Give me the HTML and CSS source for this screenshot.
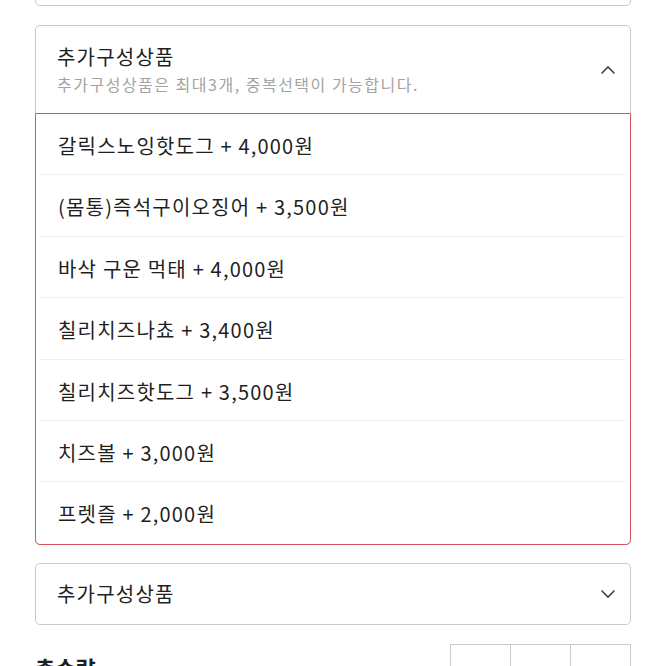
FILE: index.html
```html
<!DOCTYPE html>
<html>
<head>
    <title>추가구성상품</title>
    <link rel="stylesheet" href="styles.css">
</head>
<body>
    <div class="page">
        <div class="prev-box"></div>

        <div class="option open">
            <div class="option-head">
                <div class="head-text">
                    <p class="head-title">추가구성상품</p>
                    <p class="head-sub">추가구성상품은 최대3개, 중복선택이 가능합니다.</p>
                </div>
                <svg class="chevron" width="16" height="10" viewBox="0 0 16 10">
                    <path d="M1.5 8.5 L8 2 L14.5 8.5" fill="none" stroke="#444" stroke-width="1.6"/>
                </svg>
            </div>
            <ul class="option-list">
                <li class="option-item">갈릭스노잉핫도그 + 4,000원</li>
                <li class="option-item">(몸통)즉석구이오징어 + 3,500원</li>
                <li class="option-item">바삭 구운 먹태 + 4,000원</li>
                <li class="option-item">칠리치즈나쵸 + 3,400원</li>
                <li class="option-item">칠리치즈핫도그 + 3,500원</li>
                <li class="option-item">치즈볼 + 3,000원</li>
                <li class="option-item">프렛즐 + 2,000원</li>
            </ul>
        </div>

        <div class="option closed">
            <span class="closed-title">추가구성상품</span>
            <svg class="chevron" width="16" height="10" viewBox="0 0 16 10">
                <path d="M1.5 1.5 L8 8 L14.5 1.5" fill="none" stroke="#444" stroke-width="1.6"/>
            </svg>
        </div>

        <div class="total">
            <span class="total-label">총수량</span>
            <div class="qty">
                <div class="qty-cell"></div>
                <div class="qty-cell"></div>
                <div class="qty-cell"></div>
            </div>
        </div>
    </div>
</body>
</html>
```

FILE: styles.css
```css
body{
    margin: 0;
    background-color: white;
    color: #1f1f1f;
    font-family: "Noto Sans CJK KR", "Noto Sans", sans-serif;
}

.page{
    padding: 0 35px;
}

.prev-box{
    height: 50px;
    margin-top: -46px;
    border: 1px solid #c9c9c9;
    border-radius: 5px;
}

.option{
    border: 1px solid #c9c9c9;
    border-radius: 5px;
    background-color: white;
}

.open{
    margin-top: 19px;
}

.option-head{
    display: flex;
    align-items: center;
    justify-content: space-between;
    box-sizing: border-box;
    height: 87px;
    padding: 0 14px 0 21px;
}

.head-text p{
    margin: 0;
}

.head-title{
    font-size: 20px;
    line-height: 26px;
    letter-spacing: 1.2px;
}

.head-sub{
    font-size: 16px;
    line-height: 22px;
    color: #a3a3a3;
    letter-spacing: 1.5px;
    margin-top: 3px !important;
}

.option-list{
    list-style: none;
    margin: 0 -1px -1px -1px;
    padding: 0;
    border: 1px solid #d9545f;
    border-radius: 0 0 5px 5px;
}

.option-item{
    box-sizing: border-box;
    height: 61.4px;
    line-height: 64px;
    margin: 0 4px;
    padding-left: 18px;
    font-size: 20px;
    letter-spacing: 1.2px;
    border-bottom: 1px solid #f0f0f0;
}

.option-item:last-child{
    border-bottom: none;
}

.closed{
    display: flex;
    align-items: center;
    justify-content: space-between;
    height: 60px;
    margin-top: 18px;
    padding: 0 14px 0 21px;
}

.closed-title{
    font-size: 20px;
    letter-spacing: 1.2px;
}

.total{
    display: flex;
    justify-content: space-between;
    align-items: flex-start;
    margin-top: 19px;
}

.total-label{
    margin-top: 8px;
    font-size: 22px;
    font-weight: bold;
    line-height: 30px;
}

.qty{
    display: flex;
    border: 1px solid #c9c9c9;
}

.qty-cell{
    width: 59px;
    height: 44px;
    border-left: 1px solid #c9c9c9;
}

.qty-cell:first-child{
    border-left: none;
}
```
